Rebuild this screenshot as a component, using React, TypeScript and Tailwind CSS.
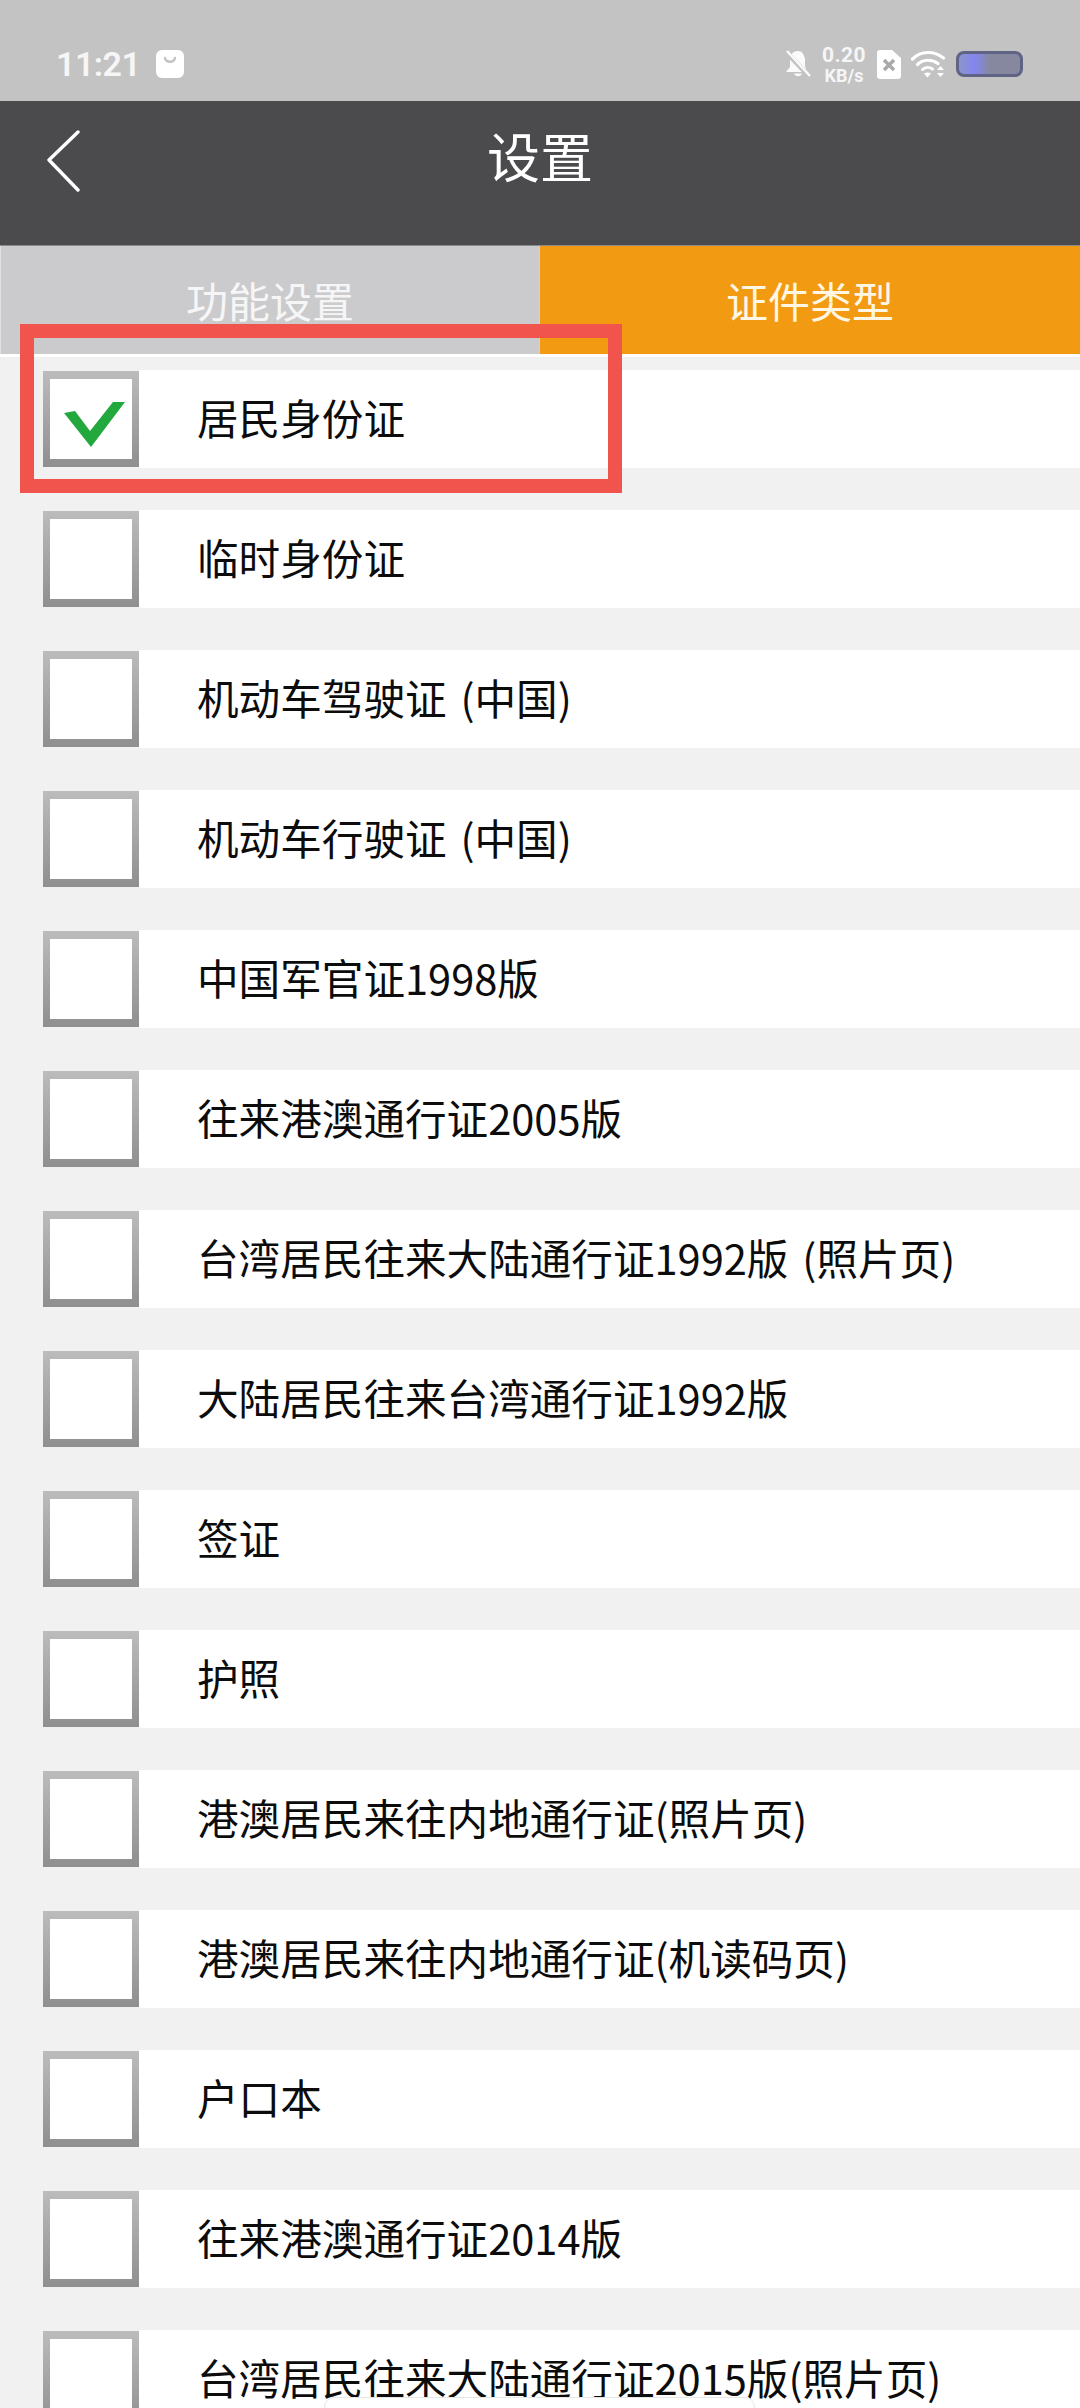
import React from "react";

const items = [
  "居民身份证",
  "临时身份证",
  "机动车驾驶证\u2004(中国)",
  "机动车行驶证\u2004(中国)",
  "中国军官证1998版",
  "往来港澳通行证2005版",
  "台湾居民往来大陆通行证1992版\u2004(照片页)",
  "大陆居民往来台湾通行证1992版",
  "签证",
  "护照",
  "港澳居民来往内地通行证(照片页)",
  "港澳居民来往内地通行证(机读码页)",
  "户口本",
  "往来港澳通行证2014版",
  "台湾居民往来大陆通行证2015版(照片页)",
];

function Row({ label, checked }: { label: string; checked: boolean }) {
  return (
    <div className="flex items-center pl-[43px] shrink-0">
      <div className="w-[96px] h-[96px] shrink-0 bg-linear-to-b from-[#bcbcbc] to-[#8f8f8f] px-[7px] py-[8px]">
        <div className="w-full h-full bg-white relative">
          {checked && (
            <svg className="absolute left-[-7px] top-[-8px]" width="96" height="96" viewBox="0 0 96 96">
              <path d="M21 42 L32 40 L47 60 L70 31 L82 31 L48 76 Z" fill="#22a83c" />
            </svg>
          )}
        </div>
      </div>
      <div className="flex-1 h-[98px] bg-white flex items-center pl-[58px] pb-[2px] text-[41.6px] leading-none text-[#0c0c0c] whitespace-nowrap">
        {label}
      </div>
    </div>
  );
}

export default function App() {
  return (
    <div className="relative w-[1080px] h-[2408px] overflow-hidden bg-[#f1f1f1] font-['Noto_Sans_CJK_SC','Noto_Sans',sans-serif]">
      {/* status bar */}
      <div className="h-[101px] bg-[#c3c3c3] flex items-center justify-between pt-[27px] pl-[56px] pr-[57px] text-[#f6f6f6] font-['Roboto',sans-serif]">
        <div className="flex items-center gap-[16px]">
          <span className="text-[34px] leading-none font-semibold tracking-[-0.5px]">11:21</span>
          <svg width="28" height="28" viewBox="0 0 28 28">
            <rect x="0" y="0" width="28" height="28" rx="6" fill="#fff" />
            <path d="M9 8 C10 13 18 13 19 8" fill="none" stroke="#c3c3c3" strokeWidth="2.4" strokeLinecap="round" />
          </svg>
        </div>
        <div className="flex items-center">
          <svg width="26" height="28" viewBox="0 0 26 28" className="mr-[10px]">
            <path d="M13 1 C7 1 5 6 5 11 L5 17 L1 22 L22 22 L20 16 L20 9 C19 4 17 1 13 1 Z M9 23.5 L17 23.5 C16 27 10 27 9 23.5 Z" fill="#fbfbfb" />
            <path d="M0 1 L25 27" stroke="#c3c3c3" strokeWidth="5" />
            <path d="M2 1 L25 26" stroke="#fbfbfb" strokeWidth="2.4" />
          </svg>
          <div className="flex flex-col items-center w-[46px] font-bold">
            <span className="text-[21px] leading-[21px] tracking-[0.5px]">0.20</span>
            <span className="text-[18px] leading-[15px] mt-[2px]">KB/s</span>
          </div>
          <svg width="24" height="29" viewBox="0 0 24 29" className="ml-[10px] mr-[10px]">
            <path d="M3 0 L15 0 L24 8 L24 26 Q24 29 21 29 L3 29 Q0 29 0 26 L0 3 Q0 0 3 0 Z" fill="#fff" />
            <path d="M7 10 L17 20 M17 10 L7 20" stroke="#a9a9a9" strokeWidth="3.4" />
          </svg>
          <svg width="35" height="28" viewBox="0 0 35 28" fill="none" className="mr-[10px]">
            <path d="M1.5 9 C10 0.5 23 0.5 32.5 8" stroke="#fff" strokeWidth="3.2" strokeLinecap="round" />
            <path d="M6.5 14.5 C12 9 21 9 27 13.5" stroke="#fff" strokeWidth="3.2" strokeLinecap="round" />
            <path d="M11.5 19.5 C14.5 16.8 18.5 16.8 21.5 19" stroke="#fff" strokeWidth="3" strokeLinecap="round" />
            <path d="M13 23.5 L16.5 27.5 L20 23.5 C18 22 15 22 13 23.5 Z" fill="#fff" />
            <path d="M26 20 L29.5 16 L33 20 Z M26 23 L29.5 27 L33 23 Z" fill="#fff" />
          </svg>
          <div className="w-[67px] h-[26px] rounded-[8px] border-[3px] border-[#5f6484] bg-linear-to-r from-[#8d95c8] via-[#8585f0] via-25% to-[#85889f] to-50%" />
        </div>
      </div>

      {/* header */}
      <div className="h-[145px] bg-[#4b4b4d] border-b border-[#8a8a8a] flex text-white">
        <div className="w-[140px] pl-[46px] pt-[29px]">
          <svg width="34" height="62" viewBox="0 0 34 62" fill="none">
            <path d="M32 2 L3 30 L32 60" stroke="#fff" strokeWidth="3.4" strokeLinecap="round" strokeLinejoin="round" />
          </svg>
        </div>
        <div className="flex-1 flex justify-center pt-[24px] text-[53px] leading-[60px]">设置</div>
        <div className="w-[140px]" />
      </div>

      {/* tabs */}
      <div className="h-[111px] flex border-b-[3px] border-white">
        <div className="w-[539px] bg-[#cbcbcd] border-l border-[#e0e0e0] text-[#f6f6f6] flex items-center justify-center text-[42px] leading-none pb-[1px]">
          功能设置
        </div>
        <div className="w-[541px] bg-[#f39a13] border-l border-[#f8cf8a] text-[#fff7e4] flex items-center justify-center text-[42px] leading-none pb-[1px]">
          证件类型
        </div>
      </div>

      {/* list */}
      <div className="flex flex-col gap-[42px] pt-[13px]">
        {items.map((label, i) => (
          <Row key={label} label={label} checked={i === 0} />
        ))}
      </div>

      {/* annotation highlight */}
      <div className="absolute left-[20px] top-[324px] w-[602px] h-[169px] border-[14px] border-[#f1534d]" />
      {/* home indicator */}
      <div className="absolute left-[324px] top-[2397px] w-[431px] h-[20px] bg-white rounded-[10px] border border-[#e6e6e6]" />
    </div>
  );
}
